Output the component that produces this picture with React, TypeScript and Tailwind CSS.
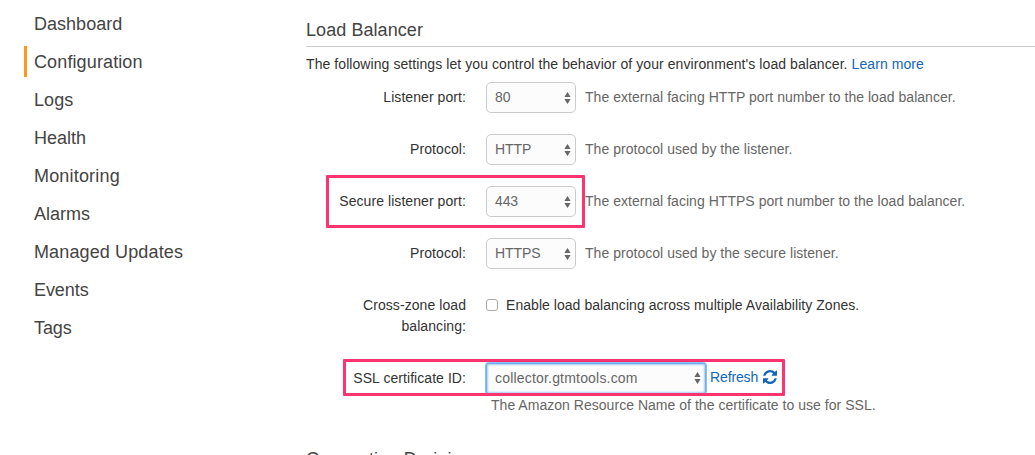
import React from "react";

const navItems = [
  { label: "Dashboard", tracking: "tracking-[0.02px]" },
  { label: "Configuration", tracking: "tracking-[0.12px]", active: true },
  { label: "Logs", tracking: "tracking-[0.1px]" },
  { label: "Health", tracking: "tracking-[0px]" },
  { label: "Monitoring", tracking: "tracking-[0.18px]" },
  { label: "Alarms", tracking: "tracking-[0px]" },
  { label: "Managed Updates", tracking: "tracking-[0.13px]" },
  { label: "Events", tracking: "tracking-[-0.08px]" },
  { label: "Tags", tracking: "tracking-[-0.1px]" },
];

const ports = [
  { label: "Listener port:", value: "80", hint: "The external facing HTTP port number to the load balancer." },
  { label: "Protocol:", value: "HTTP", hint: "The protocol used by the listener." },
  {
    label: "Secure listener port:",
    value: "443",
    hint: "The external facing HTTPS port number to the load balancer.",
    marked: true,
  },
  { label: "Protocol:", value: "HTTPS", hint: "The protocol used by the secure listener." },
];

function Arrows() {
  return (
    <svg className="h-3 w-[7px] shrink-0" viewBox="0 0 7 12" fill="#666">
      <path d="M3.5 0 6.600 5H.4zM3.5 12 .4 7h6.200z" />
    </svg>
  );
}

function RefreshIcon() {
  return (
    <svg className="h-[14px] w-[14px]" viewBox="0 0 1536 1536" fill="currentColor">
      <path d="M1511 928q0 5-1 7-64 268-268 434.500t-478 166.500q-146 0-282.500-55t-243.500-157l-129 129q-19 19-45 19t-45-19-19-45v-448q0-26 19-45t45-19h448q26 0 45 19t19 45-19 45l-137 137q71 66 161 102t187 36q134 0 250-65t186-179q11-17 53-117 8-23 30-23h192q13 0 22.500 9.500t9.500 22.500zm25-800v448q0 26-19 45t-45 19h-448q-26 0-45-19t-19-45 19-45l138-138q-148-137-349-137-134 0-250 65t-186 179q-11 17-53 117-8 23-30 23h-199q-13 0-22.500-9.500t-9.500-22.500v-7q65-268 270-434.500t480-166.500q146 0 284 55.500t245 156.500l130-129q19-19 45-19t45 19 19 45z" />
    </svg>
  );
}

export default function App() {
  return (
    <div className="flex h-[455px] w-[1035px] overflow-hidden bg-white font-['Liberation_Sans',Arial,sans-serif] text-sm whitespace-nowrap text-[#333]">
      <nav className="flex w-[306px] shrink-0 flex-col gap-[7px] pt-2 pl-6 text-lg text-[#444]">
        {navItems.map((item) => (
          <a
            key={item.label}
            className={`flex h-[31px] shrink-0 items-center border-l-[3px] pl-[7px] ${item.active ? "border-[#ff9914]" : "border-transparent"}`}
          >
            <span className={item.tracking}>{item.label}</span>
          </a>
        ))}
      </nav>

      <main className="flex min-w-0 flex-1 flex-col">
        <h2 className="h-[47px] shrink-0 border-b border-[#ccc] pt-[17px] text-lg leading-[26px] tracking-[0.07px] text-[#444]">
          Load Balancer
        </h2>
        <p className="h-[35px] shrink-0 pt-[7px] leading-5 tracking-[0.075px]">
          The following settings let you control the behavior of your environment's load balancer.{" "}
          <a className="text-[#1166bb]">Learn more</a>
        </p>

        <div className="flex flex-col gap-[21px]">
          {ports.map((row) => (
            <div key={row.hint} className="relative flex h-[31px] items-center">
              <label className="w-40 pb-[2px] text-right tracking-[0.07px]">{row.label}</label>
              <div className="ml-5 flex h-[31px] w-[90px] items-center justify-between rounded-[5px] border border-[#ccc] bg-[#fcfcfc] pr-1 pl-2 text-[#666]">
                <span className="pb-[2px] tracking-[-0.1px]">{row.value}</span>
                <Arrows />
              </div>
              <span className="ml-[9px] pb-[2px] tracking-[0.035px] text-[#666]">{row.hint}</span>
              {row.marked && (
                <div className="absolute -top-[11px] left-5 h-[53px] w-[259px] rounded-[1px] border-[3px] border-[#ff3370]" />
              )}
            </div>
          ))}
        </div>

        <div className="mt-[26px] flex h-[42px] shrink-0 leading-[21px]">
          <label className="w-40 text-right tracking-[0.07px]">
            Cross-zone load
            <br />
            balancing:
          </label>
          <span className="mt-[4px] ml-5 h-3 w-3 rounded-[3px] border border-[#aaa] bg-white" />
          <span className="ml-2 tracking-[0.045px]">Enable load balancing across multiple Availability Zones.</span>
        </div>

        <div className="relative mt-[25px] flex h-[32px] shrink-0 items-center">
          <label className="w-40 text-right tracking-[0.06px]">SSL certificate ID:</label>
          <div className="ml-5 flex h-[31px] w-[220px] items-center justify-between rounded-[3px] border border-[#71aeee] bg-[#fcfcfc] pr-1 pl-2 text-[#666] shadow-[0_0_0_1px_#8dbff2,inset_0_0_2px_1px_#a8cdf5]">
            <span className="tracking-[0.19px]">collector.gtmtools.com</span>
            <Arrows />
          </div>
          <a className="mb-[2px] ml-1 flex items-center gap-[5px] text-[#1166bb]">
            <span className="tracking-[-0.13px]">Refresh</span>
            <RefreshIcon />
          </a>
          <div className="absolute -top-[3px] left-[37px] h-[37px] w-[442px] rounded-[1px] border-[3px] border-[#ff3370]" />
        </div>
        <p className="ml-[185px] h-[22px] shrink-0 leading-[22px] tracking-[0.03px] text-[#666]">
          The Amazon Resource Name of the certificate to use for SSL.
        </p>
        <h2 className="mt-[30px] shrink-0 text-lg leading-[26px] tracking-[0.15px] text-[#444]">Connection Draining</h2>
      </main>
    </div>
  );
}
